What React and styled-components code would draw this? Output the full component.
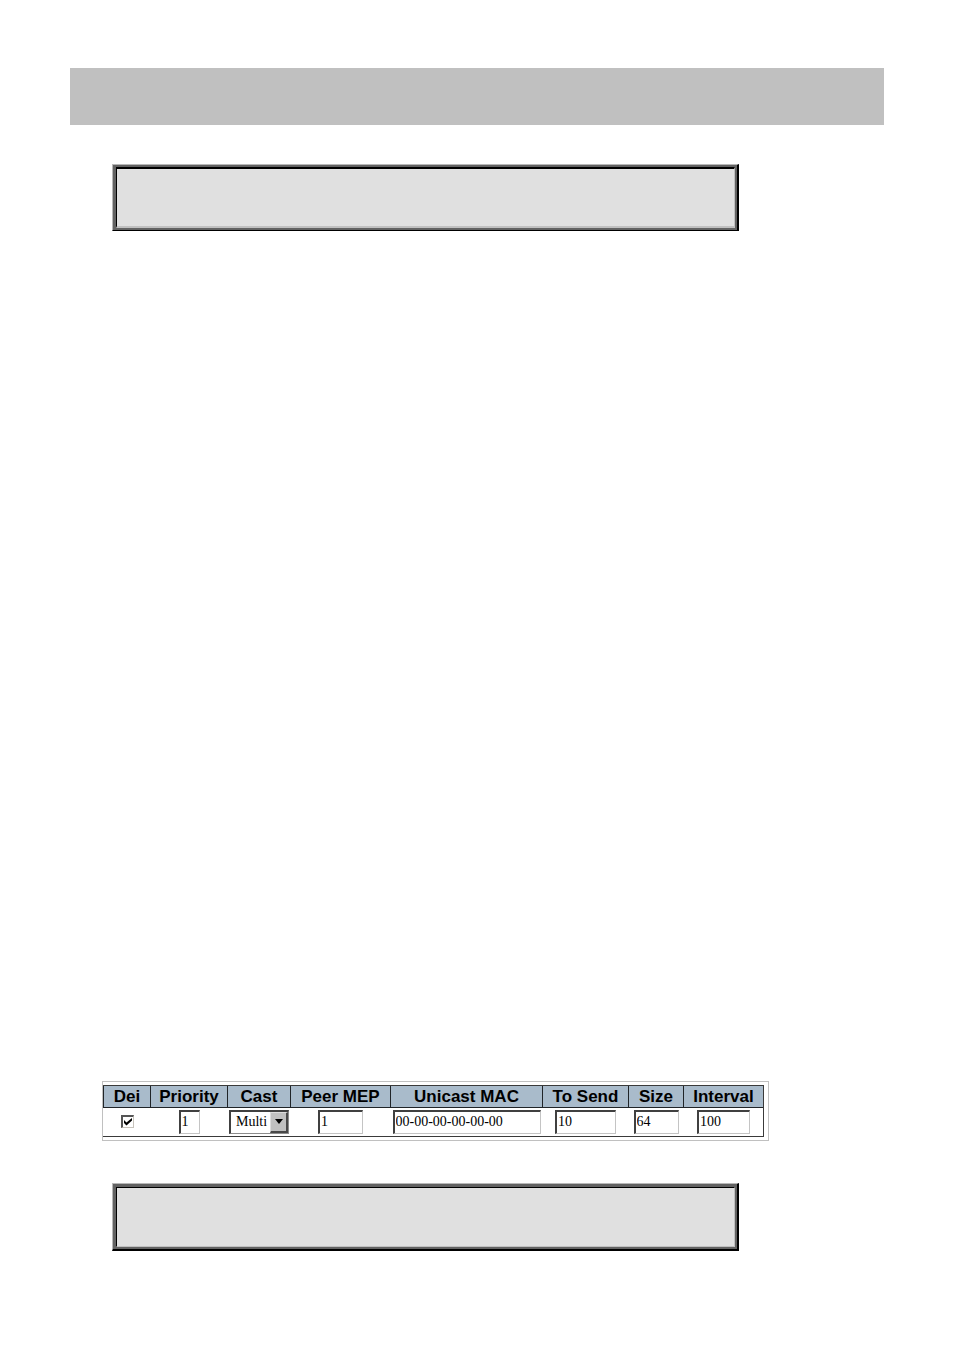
import React, { useState } from "react";
import styled, { createGlobalStyle } from "styled-components";

const GlobalStyle = createGlobalStyle`
  *, *::before, *::after { box-sizing: border-box; }
  body { margin: 0; background: #fff; color: #000; font-family: "Liberation Sans", Arial, sans-serif; }
`;

const Page = styled.main`
  display: flex;
  flex-direction: column;
  align-items: flex-start;
  min-height: 100vh;
  padding: 68px 70px 99px;
`;

const Banner = styled.header`
  align-self: stretch;
  height: 57px;
  background: #c0c0c0;
`;

const ExampleFrame = styled.section`
  width: 100%;
  max-width: 627px;
  margin: ${(p) => p.$gap}px 0 0 42px;
  border: solid;
  border-width: 1px 2px ${(p) => p.$base}px 1px;
  border-color: #b8b8b8 #000 #000 #b8b8b8;
`;

const ExampleBezel = styled.div`
  border: solid #626262;
  border-width: ${(p) => p.$top}px 2px 2px 3px;
`;

const ExampleBody = styled.div`
  height: ${(p) => p.$height}px;
  background: #e0e0e0;
  border: solid;
  border-width: ${(p) => p.$top}px 1px ${(p) => p.$bottom}px 1px;
  border-color: #000 #c0c0c0 #c0c0c0 #000;
`;

const Figure = styled.section`
  margin: 850px 0 0 32px;
  padding: 3px 4px 3px 0;
  border: 1px solid #c0c0c0;
`;

const Table = styled.table`
  width: 661px;
  table-layout: fixed;
  border-collapse: separate;
  border-spacing: 0;
  border: solid #3a3a3a;
  border-width: 1px 1px 1px 0;
`;

const Heading = styled.th`
  width: ${(p) => p.$width}px;
  height: 22px;
  padding: 0;
  background: #a9bbcb;
  border: solid #202428;
  border-width: 0 0 1px 1px;
  font-size: 17px;
  line-height: 20px;
  font-weight: bold;
  white-space: nowrap;
`;

const Cell = styled.td`
  height: 28px;
  padding: 1px 0 2px 1px;
  text-align: center;
  vertical-align: middle;
  line-height: 0;
`;

const TextBox = styled.input`
  width: ${(p) => p.$width}px;
  height: 24px;
  margin: 0;
  padding: 0 0 0 1px;
  background: #fff;
  border: solid;
  border-width: 2px 1px 1px 2px;
  border-color: #404040 #c4c4c4 #c4c4c4 #404040;
  border-radius: 0;
  outline: 0;
  color: #000;
  font: 14px "Liberation Serif", "Times New Roman", serif;
`;

const SelectFrame = styled.span`
  display: inline-block;
  position: relative;
  width: 60px;
  height: 24px;
`;

const Select = styled.select`
  appearance: none;
  width: 100%;
  height: 24px;
  margin: 0;
  padding: 0 18px 1px 5px;
  background: #fff;
  border: solid;
  border-width: 2px 1px 1px 2px;
  border-color: #404040 #8c8c8c #8c8c8c #404040;
  border-radius: 0;
  outline: 0;
  color: #000;
  font: 14px "Liberation Serif", "Times New Roman", serif;
`;

const DropArrow = styled.span`
  position: absolute;
  top: 2px;
  right: 1px;
  display: flex;
  align-items: center;
  justify-content: center;
  width: 18px;
  height: 21px;
  background: #c0c0c0;
  border: solid;
  border-width: 1px 2px 2px 1px;
  border-color: #dcdcdc #484848 #484848 #dcdcdc;
  pointer-events: none;
`;

const TickFrame = styled.span`
  display: inline-block;
  position: relative;
  width: 13px;
  height: 13px;
`;

const Tick = styled.input`
  appearance: none;
  display: block;
  width: 13px;
  height: 13px;
  margin: 0;
  background: #fff;
  border: solid;
  border-width: 2px 1px 1px 2px;
  border-color: #555 #c8c4bc #c8c4bc #555;
  &:not(:checked) + svg { display: none; }
`;

const TickMark = styled.svg`
  position: absolute;
  top: 3px;
  left: 3px;
  pointer-events: none;
`;

const columns = [
  { label: "Dei", width: 47, kind: "tick" },
  { label: "Priority", width: 77, field: 21, value: "1" },
  { label: "Cast", width: 63, kind: "select" },
  { label: "Peer MEP", width: 100, field: 45, value: "1" },
  { label: "Unicast MAC", width: 152, field: 148, value: "00-00-00-00-00-00" },
  { label: "To Send", width: 86, field: 61, value: "10" },
  { label: "Size", width: 55, field: 45, value: "64" },
  { label: "Interval", width: 80, field: 53, value: "100" },
];

function Control({ column }) {
  const [checked, setChecked] = useState(true);
  if (column.kind === "tick") {
    return (
      <TickFrame>
        <Tick
          type="checkbox"
          aria-label={column.label}
          checked={checked}
          onChange={(e) => setChecked(e.target.checked)}
        />
        <TickMark width="8" height="8" viewBox="0 0 8 8" aria-hidden="true">
          <path d="M0 2v3L2.5 7.500L8 2.500V0L2.500 4.500z" fill="#000" />
        </TickMark>
      </TickFrame>
    );
  }
  if (column.kind === "select") {
    return (
      <SelectFrame>
        <Select aria-label={column.label} defaultValue="Multi">
          <option>Multi</option>
          <option>Uni</option>
        </Select>
        <DropArrow>
          <svg width="8" height="5" viewBox="0 0 8 5" aria-hidden="true">
            <path d="M0 0h8L4 5z" fill="#000" />
          </svg>
        </DropArrow>
      </SelectFrame>
    );
  }
  return (
    <TextBox
      type="text"
      aria-label={column.label}
      defaultValue={column.value}
      $width={column.field}
    />
  );
}

export default function App() {
  return (
    <>
      <GlobalStyle />
      <Page>
        <Banner />
        <ExampleFrame $gap={39} $base={1}>
          <ExampleBezel $top={2}>
            <ExampleBody $height={61} $top={2} $bottom={2} />
          </ExampleBezel>
        </ExampleFrame>
        <Figure>
          <Table>
            <thead>
              <tr>
                {columns.map((c) => (
                  <Heading key={c.label} scope="col" $width={c.width}>
                    {c.label}
                  </Heading>
                ))}
              </tr>
            </thead>
            <tbody>
              <tr>
                {columns.map((c) => (
                  <Cell key={c.label}>
                    <Control column={c} />
                  </Cell>
                ))}
              </tr>
            </tbody>
          </Table>
        </Figure>
        <ExampleFrame $gap={42} $base={2}>
          <ExampleBezel $top={3}>
            <ExampleBody $height={60} $top={1} $bottom={1} />
          </ExampleBezel>
        </ExampleFrame>
      </Page>
    </>
  );
}
